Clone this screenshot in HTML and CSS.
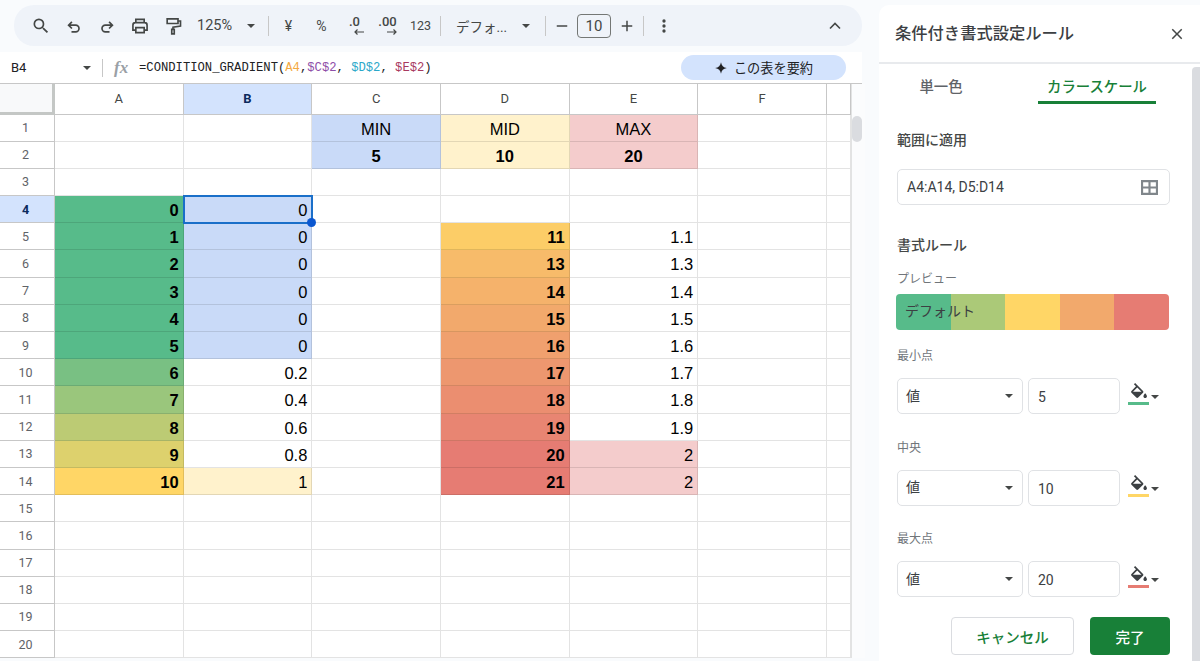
FILE: index.html
```html
<!DOCTYPE html>
<html lang="ja">
<head>
  <meta charset="UTF-8" />
  <title>条件付き書式設定ルール</title>
  <link rel="stylesheet" href="styles.css">
</head>
<body>
  <div class="app">
    <main class="main">
      <div class="toolbar">
        <button class="tool"><svg viewBox="0 0 24 24"><path d="M15.5 14h-.79l-.28-.27A6.471 6.471 0 0 0 16 9.5 6.5 6.5 0 1 0 9.5 16c1.61 0 3.09-.59 4.23-1.57l.27.28v.79l5 4.99L20.49 19l-4.99-5zm-6 0C7.01 14 5 11.99 5 9.5S7.01 5 9.5 5 14 7.01 14 9.5 11.99 14 9.5 14z"/></svg></button>
        <button class="tool"><svg class="line" viewBox="0 0 24 24"><path d="M9.5 7 5.5 11l4 4M5.5 11H14a4 4 0 0 1 0 8H9"/></svg></button>
        <button class="tool"><svg class="line" viewBox="0 0 24 24"><path d="M14.5 7l4 4-4 4M18.5 11H10a4 4 0 0 0 0 8h5"/></svg></button>
        <button class="tool"><svg class="line" viewBox="0 0 24 24"><path d="M7 8V4h10v4M7 17H3.500v-6a3 3 0 0 1 3-3h11a3 3 0 0 1 3 3v6H17M7 14h10v6H7z"/></svg></button>
        <button class="tool"><svg class="line" viewBox="0 0 24 24"><path d="M5 3.500h13v5.500H5zM18 6h3v6l-9 1.500V16M10.500 16h3v5.500h-3z"/></svg></button>
        <span class="zoom-level">125%</span>
        <span class="caret zoom-caret"></span>
        <span class="sep"></span>
        <button class="tool text-tool">¥</button>
        <button class="tool text-tool">%</button>
        <button class="tool dec"><span>.0</span><svg class="line" viewBox="0 0 12 6"><path d="M11 3H2M4.500 .5 2 3l2.500 2.500"/></svg></button>
        <button class="tool dec"><span>.00</span><svg class="line" viewBox="0 0 12 6"><path d="M1 3h9M7.500 .5 10 3 7.500 5.500"/></svg></button>
        <button class="tool text-tool small-tool">123</button>
        <span class="sep"></span>
        <span class="font-name">デフォ...</span>
        <span class="caret font-caret"></span>
        <span class="sep"></span>
        <button class="tool step"><svg class="line" viewBox="0 0 24 24"><path d="M5 12h14"/></svg></button>
        <span class="size-box">10</span>
        <button class="tool step"><svg class="line" viewBox="0 0 24 24"><path d="M5 12h14M12 5v14"/></svg></button>
        <span class="sep"></span>
        <button class="tool"><svg viewBox="0 0 24 24"><circle cx="12" cy="6" r="2"/><circle cx="12" cy="12" r="2"/><circle cx="12" cy="18" r="2"/></svg></button>
        <button class="tool collapse"><svg class="line" viewBox="0 0 24 24"><path d="M6 15l6-6 6 6"/></svg></button>
      </div>

      <div class="formula-bar">
        <span class="name-box">B4</span>
        <span class="caret name-caret"></span>
        <span class="sep"></span>
        <span class="fx">fx</span>
        <span class="formula">=CONDITION_GRADIENT(<b class="f-a">A4</b>,<b class="f-c">$C$2</b>, <b class="f-d">$D$2</b>, <b class="f-e">$E$2</b>)</span>
        <span class="summary"><svg viewBox="0 0 24 24"><path d="M12 2c1 6 4 9 10 10-6 1-9 4-10 10-1-6-4-9-10-10 6-1 9-4 10-10z"/></svg>この表を要約</span>
      </div>

      <div class="sheet">
        <div class="grid">
          <div class="corner"></div><div class="ch">A</div><div class="ch on">B</div><div class="ch">C</div><div class="ch">D</div><div class="ch">E</div><div class="ch">F</div><div class="ch"></div>

          <div class="rh">1</div><div class="c"></div><div class="c"></div><div class="c mid blue">MIN</div><div class="c mid cream">MID</div><div class="c mid pink">MAX</div><div class="c"></div><div class="c"></div>
          <div class="rh">2</div><div class="c"></div><div class="c"></div><div class="c mid bold blue">5</div><div class="c mid bold cream">10</div><div class="c mid bold pink">20</div><div class="c"></div><div class="c"></div>
          <div class="rh">3</div><div class="c"></div><div class="c"></div><div class="c"></div><div class="c"></div><div class="c"></div><div class="c"></div><div class="c"></div>
          <div class="rh on">4</div><div class="c bold v5">0</div><div class="c blue picked">0</div><div class="c"></div><div class="c"></div><div class="c"></div><div class="c"></div><div class="c"></div>
          <div class="rh">5</div><div class="c bold v5">1</div><div class="c blue">0</div><div class="c"></div><div class="c bold v11">11</div><div class="c">1.1</div><div class="c"></div><div class="c"></div>
          <div class="rh">6</div><div class="c bold v5">2</div><div class="c blue">0</div><div class="c"></div><div class="c bold v13">13</div><div class="c">1.3</div><div class="c"></div><div class="c"></div>
          <div class="rh">7</div><div class="c bold v5">3</div><div class="c blue">0</div><div class="c"></div><div class="c bold v14">14</div><div class="c">1.4</div><div class="c"></div><div class="c"></div>
          <div class="rh">8</div><div class="c bold v5">4</div><div class="c blue">0</div><div class="c"></div><div class="c bold v15">15</div><div class="c">1.5</div><div class="c"></div><div class="c"></div>
          <div class="rh">9</div><div class="c bold v5">5</div><div class="c blue">0</div><div class="c"></div><div class="c bold v16">16</div><div class="c">1.6</div><div class="c"></div><div class="c"></div>
          <div class="rh">10</div><div class="c bold v6">6</div><div class="c">0.2</div><div class="c"></div><div class="c bold v17">17</div><div class="c">1.7</div><div class="c"></div><div class="c"></div>
          <div class="rh">11</div><div class="c bold v7">7</div><div class="c">0.4</div><div class="c"></div><div class="c bold v18">18</div><div class="c">1.8</div><div class="c"></div><div class="c"></div>
          <div class="rh">12</div><div class="c bold v8">8</div><div class="c">0.6</div><div class="c"></div><div class="c bold v19">19</div><div class="c">1.9</div><div class="c"></div><div class="c"></div>
          <div class="rh">13</div><div class="c bold v9">9</div><div class="c">0.8</div><div class="c"></div><div class="c bold v20">20</div><div class="c pink">2</div><div class="c"></div><div class="c"></div>
          <div class="rh">14</div><div class="c bold v10">10</div><div class="c cream">1</div><div class="c"></div><div class="c bold v20">21</div><div class="c pink">2</div><div class="c"></div><div class="c"></div>
          <div class="rh">15</div><div class="c"></div><div class="c"></div><div class="c"></div><div class="c"></div><div class="c"></div><div class="c"></div><div class="c"></div>
          <div class="rh">16</div><div class="c"></div><div class="c"></div><div class="c"></div><div class="c"></div><div class="c"></div><div class="c"></div><div class="c"></div>
          <div class="rh">17</div><div class="c"></div><div class="c"></div><div class="c"></div><div class="c"></div><div class="c"></div><div class="c"></div><div class="c"></div>
          <div class="rh">18</div><div class="c"></div><div class="c"></div><div class="c"></div><div class="c"></div><div class="c"></div><div class="c"></div><div class="c"></div>
          <div class="rh">19</div><div class="c"></div><div class="c"></div><div class="c"></div><div class="c"></div><div class="c"></div><div class="c"></div><div class="c"></div>
          <div class="rh">20</div><div class="c"></div><div class="c"></div><div class="c"></div><div class="c"></div><div class="c"></div><div class="c"></div><div class="c"></div>
        </div>
        <div class="sheet-scroll"><div class="sheet-thumb"></div></div>
      </div>
    </main>

    <aside class="panel">
      <header class="panel-head">
        <h2>条件付き書式設定ルール</h2>
        <svg class="close" viewBox="0 0 24 24"><path d="M19 6.410 17.590 5 12 10.590 6.410 5 5 6.410 10.590 12 5 17.590 6.410 19 12 13.410 17.590 19 19 17.590 13.410 12z"/></svg>
      </header>
      <div class="panel-body">
        <div class="panel-scroll"></div>
        <div class="tabs">
          <div class="tab">単一色</div>
          <div class="tab active">カラースケール</div>
        </div>
        <div class="form">
          <div class="heading first">範囲に適用</div>
          <div class="range">
            <span>A4:A14, D5:D14</span>
            <svg viewBox="0 0 16 14"><path d="M1 1h14v12H1zM8 1v12M1 7h14"/></svg>
          </div>

          <div class="heading rules">書式ルール</div>
          <div class="label preview-label">プレビュー</div>
          <div class="preview">
            <span class="s1"></span><span class="s2"></span><span class="s3"></span><span class="s4"></span><span class="s5"></span>
            <em>デフォルト</em>
          </div>

          <div class="point">
            <div class="label">最小点</div>
            <div class="point-row">
              <div class="select"><span>値</span><i class="caret"></i></div>
              <div class="value">5</div>
              <div class="fill"><svg viewBox="3 0 18 17"><path d="M16.560 8.940 7.620 0 6.210 1.410l2.380 2.380-5.150 5.150c-.59.59-.59 1.540 0 2.120l5.500 5.500c.29.29.68.44 1.060.44s.77-.15 1.060-.44l5.500-5.500c.59-.58.59-1.530 0-2.120zM5.210 10 10 5.210 14.790 10H5.210zM19 11.500s-2 2.170-2 3.500c0 1.100.9 2 2 2s2-.9 2-2c0-1.330-2-3.500-2-3.500z"/></svg><b class="swatch green"></b><i class="caret"></i></div>
            </div>
          </div>
          <div class="point">
            <div class="label">中央</div>
            <div class="point-row">
              <div class="select"><span>値</span><i class="caret"></i></div>
              <div class="value">10</div>
              <div class="fill"><svg viewBox="3 0 18 17"><path d="M16.560 8.940 7.620 0 6.210 1.410l2.380 2.380-5.150 5.150c-.59.59-.59 1.540 0 2.120l5.500 5.500c.29.29.68.44 1.060.44s.77-.15 1.060-.44l5.500-5.500c.59-.58.59-1.530 0-2.120zM5.210 10 10 5.210 14.790 10H5.210zM19 11.500s-2 2.170-2 3.500c0 1.100.9 2 2 2s2-.9 2-2c0-1.330-2-3.500-2-3.500z"/></svg><b class="swatch yellow"></b><i class="caret"></i></div>
            </div>
          </div>
          <div class="point">
            <div class="label">最大点</div>
            <div class="point-row">
              <div class="select"><span>値</span><i class="caret"></i></div>
              <div class="value">20</div>
              <div class="fill"><svg viewBox="3 0 18 17"><path d="M16.560 8.940 7.620 0 6.210 1.410l2.380 2.380-5.150 5.150c-.59.59-.59 1.540 0 2.120l5.500 5.500c.29.29.68.44 1.060.44s.77-.15 1.060-.44l5.500-5.500c.59-.58.59-1.530 0-2.120zM5.210 10 10 5.210 14.790 10H5.210zM19 11.500s-2 2.170-2 3.500c0 1.100.9 2 2 2s2-.9 2-2c0-1.330-2-3.500-2-3.500z"/></svg><b class="swatch red"></b><i class="caret"></i></div>
            </div>
          </div>

          <div class="actions">
            <button class="btn cancel">キャンセル</button>
            <button class="btn done">完了</button>
          </div>
        </div>
      </div>
    </aside>
  </div>
</body>
</html>
```

FILE: styles.css
```css
* {
  box-sizing: border-box;
}

body {
  margin: 0;
  background: #f9fbfd;
  color: #3c4043;
  font-family: Roboto, "Noto Sans CJK JP", sans-serif;
  overflow: hidden;
}

button {
  font-family: inherit;
  border: none;
  background: none;
  padding: 0;
  color: inherit;
}

.app {
  display: flex;
  height: 661px;
  overflow: hidden;
}

.main {
  width: 879px;
  flex: none;
}

.caret {
  display: block;
  width: 0;
  height: 0;
  border-left: 4.5px solid transparent;
  border-right: 4.5px solid transparent;
  border-top: 4.5px solid #444746;
  flex: none;
}

.sep {
  display: block;
  width: 1px;
  height: 20px;
  background: #c7c7c7;
  flex: none;
}

/* toolbar */
.toolbar {
  display: flex;
  align-items: center;
  width: 848px;
  height: 41px;
  margin: 5px 0 6px 14px;
  padding-left: 10px;
  background: #eff3f9;
  border-radius: 20px;
  font-size: 14px;
  color: #444746;
}

.toolbar > span {
  flex: none;
}

.tool {
  display: flex;
  align-items: center;
  justify-content: center;
  width: 33px;
  height: 33px;
  flex: none;
}

.tool svg {
  width: 20px;
  height: 20px;
  fill: #444746;
}

.tool svg.line {
  fill: none;
  stroke: #444746;
  stroke-width: 2;
}

.zoom-level {
  margin-left: 8px;
  width: 46px;
  font-size: 14.500px;
}

.zoom-caret {
  margin-left: 4px;
}

.toolbar .zoom-caret + .sep {
  margin-left: 13px;
  margin-right: 3px;
}

.text-tool {
  font-size: 14px;
}

.small-tool {
  font-size: 12.500px;
}

.dec {
  flex-direction: column;
  font-size: 13px;
  line-height: 11px;
  font-weight: 500;
}

.tool.dec svg {
  width: 12px;
  height: 6px;
  margin: 2px 0 0 8px;
  stroke-width: 1.2;
}

.text-tool + .sep {
  margin-left: 3px;
}

.font-name {
  margin-left: 15px;
  width: 62px;
  font-size: 13.500px;
}

.font-caret {
  margin-left: 4px;
}

.font-caret + .sep {
  margin-left: 15px;
}

.step {
  width: 31px;
}

.tool.step svg {
  width: 18px;
  height: 18px;
}

.size-box {
  width: 34px;
  height: 24px;
  border: 1px solid #747775;
  border-radius: 4px;
  text-align: center;
  font-size: 15px;
  line-height: 23px;
}

.size-box + .step + .sep {
  margin-left: 1px;
  margin-right: 3px;
}

.collapse {
  margin-left: auto;
  margin-right: 11px;
}

/* formula bar */
.formula-bar {
  display: flex;
  align-items: center;
  height: 32px;
  background: #fff;
  margin-right: 17px;
  border-bottom: 1px solid #c7c7c7;
  font-size: 13px;
}

.name-box {
  width: 83px;
  padding-left: 11px;
  color: #202124;
  font-size: 13px;
}

.name-caret {
  margin-right: 11px;
}

.formula-bar .sep {
  height: 18px;
}

.fx {
  width: 36px;
  padding-left: 11px;
  font: italic 700 17px "Liberation Serif", serif;
  color: #9aa0a6;
}

.formula {
  font-family: "Liberation Mono", monospace;
  font-size: 12.200px;
  color: #202124;
  white-space: pre;
}

.formula b {
  font-weight: 400;
}

.f-a { color: #f4a940; }
.f-c { color: #8e4ea8; }
.f-d { color: #2ba8c9; }
.f-e { color: #a83a5f; }

.summary {
  display: flex;
  align-items: center;
  justify-content: center;
  gap: 6px;
  width: 165px;
  height: 25px;
  margin-left: auto;
  margin-right: 16px;
  background: #d3e3fd;
  border-radius: 13px;
  font-size: 13.200px;
  color: #202124;
}

.summary svg {
  width: 14px;
  height: 14px;
  fill: #202124;
}

/* sheet */
.sheet {
  display: flex;
  width: 865px;
}

.grid {
  display: grid;
  grid-template-columns: 55px repeat(6, 128.67px) 24px;
  grid-template-rows: 30.500px;
  grid-auto-rows: 27.200px;
  width: 851px;
  background: #fff;
}

.corner {
  background: #f8f9fa;
  border-right: 3px solid #c4c7c5;
  border-bottom: 3px solid #c4c7c5;
}

.ch {
  display: flex;
  align-items: center;
  justify-content: center;
  border-right: 1px solid #c7c7c7;
  border-bottom: 1px solid #c7c7c7;
  font-size: 13px;
  color: #444746;
}

.rh {
  display: flex;
  align-items: center;
  justify-content: center;
  padding-right: 3px;
  border-right: 1px solid #c7c7c7;
  border-bottom: 1px solid #c7c7c7;
  font-size: 12.500px;
  color: #5f6368;
}

.ch.on,
.rh.on {
  background: #d3e3fd;
  color: #0b2a5c;
  font-weight: 700;
}

.c {
  padding: 3px 4px 0;
  border-right: 1px solid rgba(0, 0, 0, .11);
  border-bottom: 1px solid rgba(0, 0, 0, .11);
  font-family: "Liberation Sans", Arial, sans-serif;
  font-size: 16.500px;
  line-height: 22px;
  text-align: right;
  color: #000;
  white-space: nowrap;
}

.mid { text-align: center; }
.bold { font-weight: 700; }
.blue { background: #c9daf8; }
.cream { background: #fff2cc; }
.pink { background: #f4cccc; }

.v5 { background: #57bb8a; }
.v6 { background: #79c083; }
.v7 { background: #9ac67c; }
.v8 { background: #bccb74; }
.v9 { background: #ddd16d; }
.v10 { background: #ffd666; }
.v11 { background: #fccd67; }
.v13 { background: #f7bb6a; }
.v14 { background: #f5b26b; }
.v15 { background: #f2a96c; }
.v16 { background: #f0a06e; }
.v17 { background: #ed976f; }
.v18 { background: #eb8e70; }
.v19 { background: #e88572; }
.v20 { background: #e67c73; }

.picked {
  position: relative;
  outline: 2px solid #1a6fc9;
  outline-offset: -1px;
}

.picked::after {
  content: "";
  position: absolute;
  right: -5px;
  bottom: -5px;
  width: 9px;
  height: 9px;
  background: #0b57d0;
  border-radius: 50%;
}

.sheet-scroll {
  width: 14px;
  background: #fbfcfd;
  border-left: 1px solid #e2e3e3;
  padding: 32px 3px 0 0;
}

.sheet-thumb {
  height: 26px;
  background: #dadce0;
  border-radius: 5px;
}

/* side panel */
.panel {
  width: 321px;
  margin-top: 5px;
  background: #fff;
  border-top-left-radius: 10px;
  color: #444746;
}

.panel-head {
  display: flex;
  align-items: center;
  justify-content: space-between;
  height: 59px;
  padding: 0 14px 3px 16px;
  border-bottom: 2px solid #e8eaed;
}

.panel-head h2 {
  margin: 0;
  font-size: 16.300px;
  font-weight: 500;
  color: #3c4043;
}

.close {
  width: 18px;
  height: 18px;
  margin-top: 3px;
  fill: #444746;
}

.panel-body {
  position: relative;
  height: 597px;
  overflow: hidden;
}

.panel-scroll {
  position: absolute;
  top: 3px;
  right: 0;
  bottom: 0;
  width: 8px;
  background: #dadce0;
  border-radius: 4px 0 0 0;
}

.tabs {
  display: flex;
  gap: 38px;
  padding-left: 3px;
}

.tab {
  width: 118px;
  height: 40px;
  padding-top: 14px;
  text-align: center;
  font-size: 14.400px;
  line-height: 20px;
  font-weight: 500;
  color: #5f6368;
}

.tab.active {
  color: #188038;
  border-bottom: 3px solid #188038;
}

.form {
  width: 291px;
  padding: 0 0 0 18px;
}

.heading {
  font-size: 14px;
  line-height: 20px;
  font-weight: 500;
  color: #444746;
}

.heading.first {
  margin-top: 26px;
}

.heading.rules {
  margin-top: 30px;
}

.range {
  display: flex;
  align-items: center;
  justify-content: space-between;
  height: 36px;
  margin-top: 19px;
  padding: 0 11px 0 9px;
  border: 1px solid #e0e2e5;
  border-radius: 5px;
  font-size: 14px;
  color: #3c4043;
}

.range svg {
  width: 17px;
  height: 15px;
  fill: none;
  stroke: #80868b;
  stroke-width: 2;
}

.label {
  font-size: 12px;
  line-height: 16px;
  color: #70757a;
}

.preview-label {
  margin-top: 16px;
}

.preview {
  position: relative;
  display: flex;
  height: 36px;
  margin-top: 7px;
  margin-left: -1px;
  margin-right: 1px;
  border-radius: 4px;
  overflow: hidden;
}

.preview span {
  flex: 1;
}

.preview .s1 { background: #57bb8a; }
.preview .s2 { background: #abc978; }
.preview .s3 { background: #ffd666; }
.preview .s4 { background: #f2a96c; }
.preview .s5 { background: #e67c73; }

.preview em {
  position: absolute;
  left: 9px;
  top: 6px;
  font-style: normal;
  font-size: 14px;
  line-height: 22px;
  color: #3c4043;
}

.point {
  margin-top: 25.500px;
}

.preview + .point {
  margin-top: 18px;
}

.point-row {
  display: flex;
  margin-top: 14px;
}

.select {
  display: flex;
  align-items: center;
  justify-content: space-between;
  width: 126px;
  height: 36px;
  padding: 0 9px 0 8px;
  border: 1px solid #e0e2e5;
  border-radius: 5px;
  font-size: 14px;
  color: #3c4043;
}

.select span {
  padding-bottom: 3px;
}

.select .caret {
  border-left-width: 4px;
  border-right-width: 4px;
  border-top-width: 4px;
}

.value {
  width: 92px;
  height: 36px;
  margin-left: 5px;
  padding-left: 9px;
  border: 1px solid #e0e2e5;
  border-radius: 5px;
  font-size: 14px;
  line-height: 36px;
  color: #3c4043;
}

.fill {
  position: relative;
  width: 40px;
  height: 36px;
  margin-left: 8px;
}

.fill svg {
  position: absolute;
  left: 3px;
  top: 5px;
  width: 16px;
  height: 15px;
  fill: #3c4043;
}

.swatch {
  position: absolute;
  left: 0;
  top: 24px;
  width: 21px;
  height: 3px;
}

.swatch.green { background: #57bb8a; }
.swatch.yellow { background: #ffd666; }
.swatch.red { background: #e67c73; }

.fill .caret {
  position: absolute;
  left: 23px;
  top: 17px;
  border-left-width: 4px;
  border-right-width: 4px;
  border-top-width: 4px;
}

.actions {
  display: flex;
  justify-content: flex-end;
  gap: 16px;
  margin-top: 20px;
}

.btn {
  height: 38px;
  border-radius: 4px;
  font-size: 14.500px;
  font-weight: 500;
}

.cancel {
  width: 123px;
  border: 1px solid #dadce0;
  background: #fff;
  color: #188038;
}

.done {
  width: 80px;
  background: #188038;
  color: #fff;
}
```
